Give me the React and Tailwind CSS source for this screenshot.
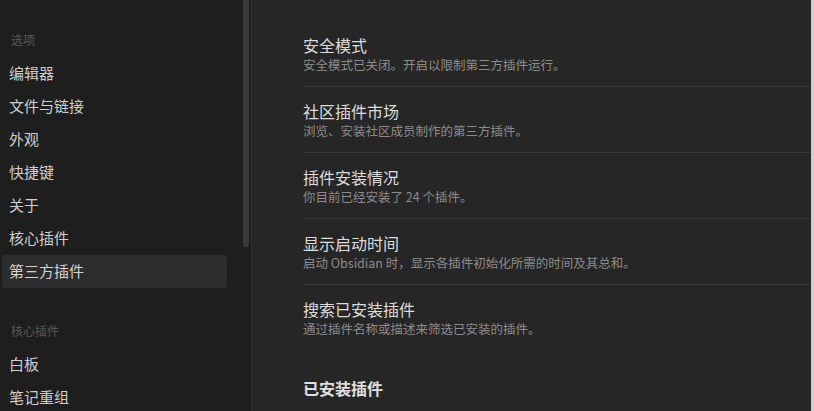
import React from 'react';

const options = ['编辑器', '文件与链接', '外观', '快捷键', '关于', '核心插件', '第三方插件'];
const corePlugins = ['白板', '笔记重组'];

const settings = [
  { title: '安全模式', desc: '安全模式已关闭。开启以限制第三方插件运行。' },
  { title: '社区插件市场', desc: '浏览、安装社区成员制作的第三方插件。' },
  { title: '插件安装情况', desc: '你目前已经安装了 24 个插件。' },
  { title: '显示启动时间', desc: '启动 Obsidian 时，显示各插件初始化所需的时间及其总和。' },
  { title: '搜索已安装插件', desc: '通过插件名称或描述来筛选已安装的插件。' },
];

// Sidebar item
const NavItem = ({ label, active }) => (
  <div
    className={`h-[33px] w-[225px] flex items-center pl-[7px] text-[15px] rounded-[3px] ${
      active ? 'bg-[#2c2c2c] text-[#d4d4d4]' : 'text-[#cfcfcf]'
    }`}
  >
    {label}
  </div>
);

const SectionLabel = ({ children, className = '' }) => (
  <div className={`h-[20px] flex items-center pl-[9px] text-[12px] text-[#595959] ${className}`}>
    {children}
  </div>
);

export default function App() {
  return (
    <div
      className="w-[814px] h-[411px] overflow-hidden flex bg-[#262626]"
      style={{ fontFamily: '"Noto Sans CJK SC", "Noto Sans", sans-serif' }}
    >
      {/* Sidebar */}
      <div className="w-[251px] h-full flex bg-[#1e1e1e] shrink-0">
        <nav className="w-[241px] pt-[30px] pl-[2px]">
          <SectionLabel className="mb-[7px]">选项</SectionLabel>
          {options.map((o) => (
            <NavItem key={o} label={o} active={o === '第三方插件'} />
          ))}
          <SectionLabel className="mt-[33px] mb-[7px]">核心插件</SectionLabel>
          {corePlugins.map((o) => (
            <NavItem key={o} label={o} />
          ))}
        </nav>
        <div className="w-[6px] ml-[2px]">
          <div className="h-[247px] bg-[#383838] rounded-b-[2px]" />
        </div>
      </div>
      <div className="w-px h-full bg-[#303030]" />

      {/* Content */}
      <div className="flex-1 flex">
        <div className="flex-1 pl-[51px] pt-[21px]">
          {settings.map((s, i) => (
            <div
              key={s.title}
              className={`pt-[13px] pb-[12px] ${i < settings.length - 1 ? 'border-b border-[#383838]' : ''}`}
            >
              <div className="h-[22px] leading-[22px] text-[16px] text-[#dcdcdc]">{s.title}</div>
              <div className="h-[18px] leading-[18px] text-[12.5px] text-[#8c8c8c] whitespace-nowrap">{s.desc}</div>
            </div>
          ))}
          <div className="mt-[27px] h-[22px] leading-[22px] text-[16px] font-bold text-[#e0e0e0]">
            已安装插件
          </div>
        </div>
        <div className="w-[3px] h-full bg-[#cfcfcf]" />
      </div>
    </div>
  );
}
